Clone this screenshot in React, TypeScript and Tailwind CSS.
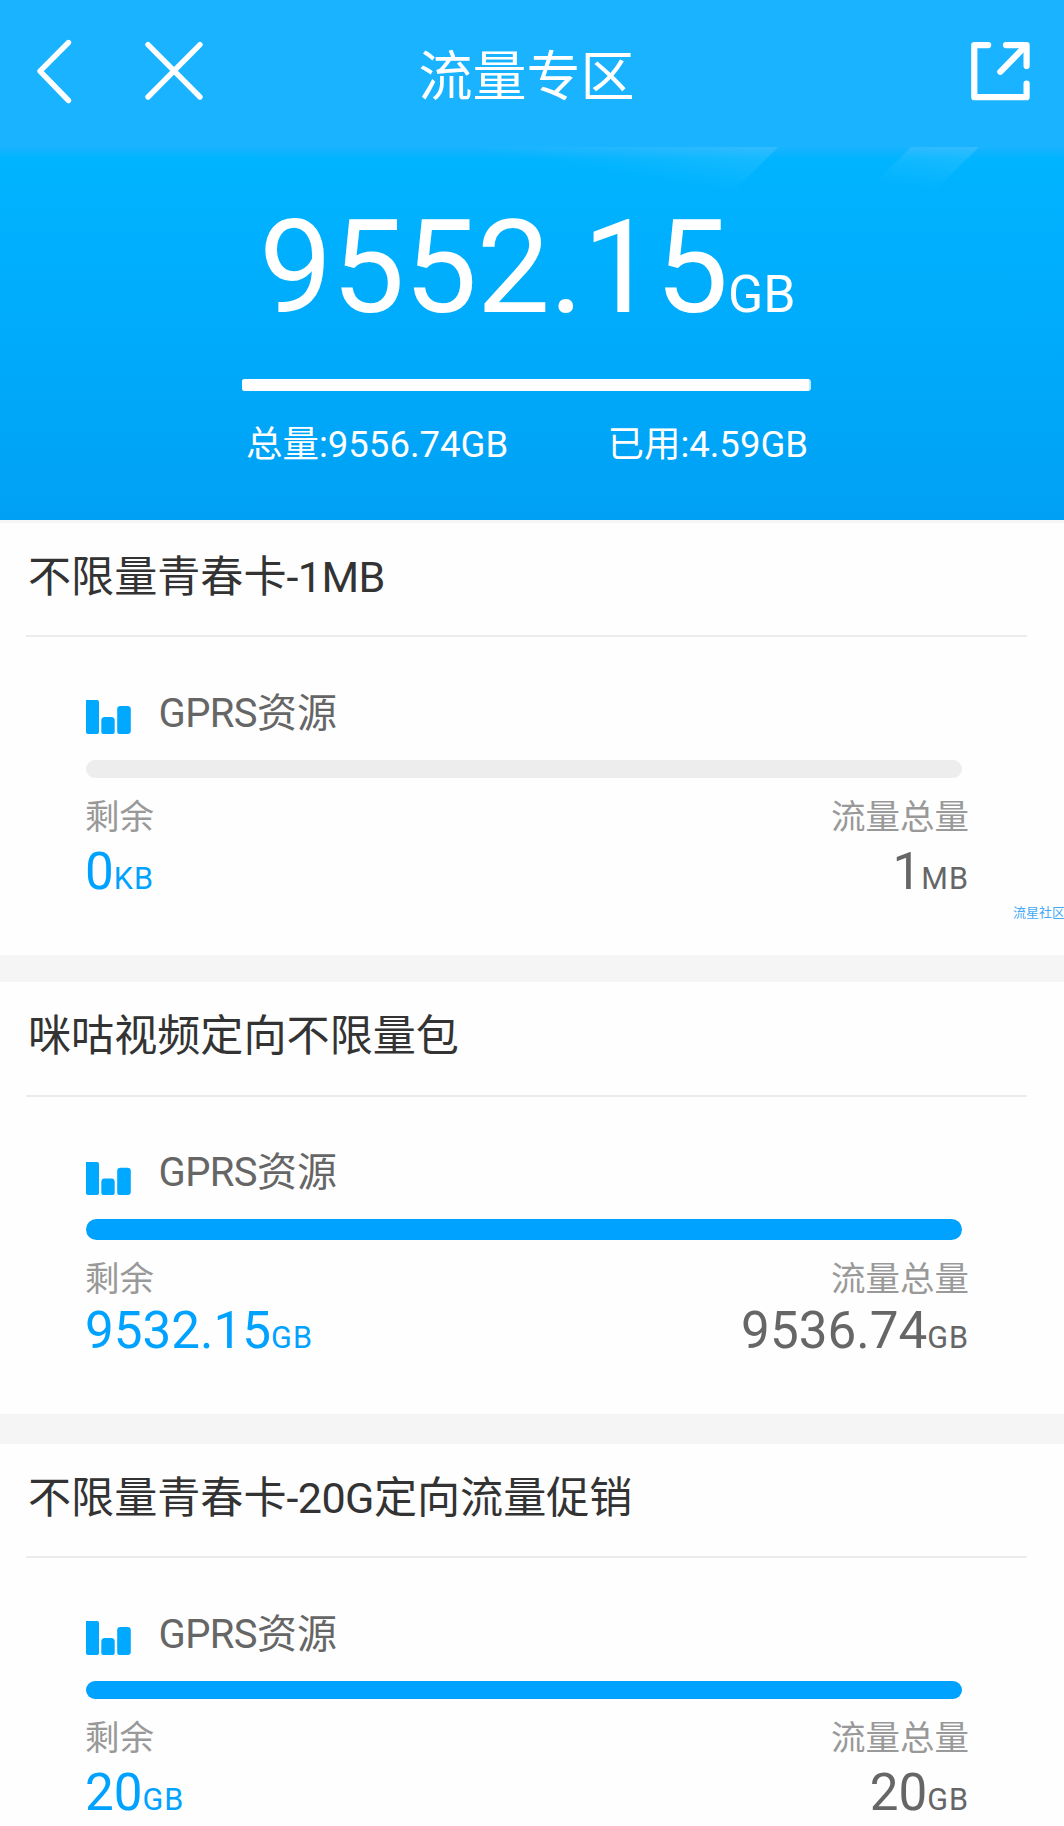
import React from "react";

type Amount = { value: string; unit: string };

type Plan = {
  title: string;
  left: Amount;
  total: Amount;
  headClass: string;
  resourceClass: string;
  iconClass: string;
  barClass: string;
  labelClass: string;
  valueClass: string;
  gapClass: string;
};

const plans: Plan[] = [
  {
    title: "不限量青春卡-1MB",
    left: { value: "0", unit: "KB" },
    total: { value: "1", unit: "MB" },
    headClass: "h-[114px]",
    resourceClass: "mt-[43px]",
    iconClass: "mt-5 h-[34px]",
    barClass: "mt-4 h-[18px] bg-[#ededed]",
    labelClass: "mt-[19px]",
    valueClass: "mt-[7px]",
    gapClass: "h-[27px]",
  },
  {
    title: "咪咕视频定向不限量包",
    left: { value: "9532.15", unit: "GB" },
    total: { value: "9536.74", unit: "GB" },
    headClass: "h-[115px]",
    resourceClass: "mt-[42px]",
    iconClass: "mt-[23px] h-[33px]",
    barClass: "mt-4 h-[21px] bg-[#00a2ff]",
    labelClass: "mt-[19px]",
    valueClass: "mt-1",
    gapClass: "h-[30px]",
  },
  {
    title: "不限量青春卡-20G定向流量促销",
    left: { value: "20", unit: "GB" },
    total: { value: "20", unit: "GB" },
    headClass: "h-[114px]",
    resourceClass: "mt-[43px]",
    iconClass: "mt-5 h-[34px]",
    barClass: "mt-4 h-[18px] bg-[#00a2ff]",
    labelClass: "mt-[19px]",
    valueClass: "mt-[7px]",
    gapClass: "h-0",
  },
];

function BackIcon() {
  return (
    <svg className="h-[72px] w-10 shrink-0" viewBox="0 0 40 72" fill="none" stroke="white" strokeWidth="5.4" strokeLinecap="round" strokeLinejoin="round">
      <path d="M33.5 7.5 5 36.2 33.5 65.5" />
    </svg>
  );
}

function CloseIcon() {
  return (
    <svg className="h-[72px] w-[68px] shrink-0" viewBox="0 0 68 72" fill="none" stroke="white" strokeWidth="5.4" strokeLinecap="round">
      <path d="M8 9.7 60 62M60 9.7 8 62" />
    </svg>
  );
}

function ShareIcon() {
  return (
    <svg className="h-[60px] w-[60px] shrink-0" viewBox="0 0 60 60" fill="none" stroke="white" strokeWidth="6.2" strokeLinecap="round" strokeLinejoin="round">
      <path d="M18.2 4.1H4.3V56.2H56.6V42.6" />
      <path d="M36 4.1H56.6V25" />
      <path d="M55.4 5.2 30.3 30.8" />
    </svg>
  );
}

function BarsIcon({ className }: { className: string }) {
  return (
    <svg className={`w-[45px] shrink-0 ${className}`} viewBox="0 0 45 34" preserveAspectRatio="none" fill="#00a8ff">
      <path d="M0 0H11Q13 0 13 2V32Q13 34 11 34H2Q0 34 0 32Z" />
      <path d="M15.3 20.5Q15.3 17 18.8 17H25.2Q28.7 17 28.7 20.5V32Q28.7 34 26.7 34H17.3Q15.3 34 15.3 32Z" />
      <path d="M31.2 9.3Q31.2 6 34.5 6H41.5Q44.8 6 44.8 9.3V30.7Q44.8 34 41.5 34H33.2Q31.2 34 31.2 32Z" />
    </svg>
  );
}

function Beams() {
  return (
    <svg className="absolute top-[147px] left-0 h-20 w-full" viewBox="0 0 1064 80" preserveAspectRatio="none">
      <defs>
        <linearGradient id="wide" gradientUnits="userSpaceOnUse" x1="750" y1="-10" x2="741" y2="46">
          <stop offset="0" stopColor="white" stopOpacity="0.13" />
          <stop offset="1" stopColor="white" stopOpacity="0" />
        </linearGradient>
        <linearGradient id="narrow" gradientUnits="userSpaceOnUse" x1="945" y1="-12" x2="937" y2="44">
          <stop offset="0" stopColor="white" stopOpacity="0.14" />
          <stop offset="1" stopColor="white" stopOpacity="0" />
        </linearGradient>
      </defs>
      <path d="M440 0H778L700 78H440Z" fill="url(#wide)" />
      <path d="M911 0H979L910 68 850 61Z" fill="url(#narrow)" />
    </svg>
  );
}

/* Latin runs are set slightly tighter than the Chinese text around them. */
function MixedText({ text }: { text: string }) {
  return (
    <>
      {text.split(/([-0-9A-Za-z]+)/).map((part, i) =>
        i % 2 === 1 ? (
          <span key={i} className="tracking-[-0.6px]">
            {part}
          </span>
        ) : (
          part
        ),
      )}
    </>
  );
}

function AmountText({ amount }: { amount: Amount }) {
  return (
    <p className="text-[51.2px] leading-[56px]">
      {amount.value}
      <span className="text-[30.5px] tracking-[1px]">{amount.unit}</span>
    </p>
  );
}

function PlanCard({ plan }: { plan: Plan }) {
  return (
    <>
      <section className="h-[432px] bg-[#fefefe]">
        <div className={`mr-[37px] ml-[26px] border-b-2 border-[#ececec] ${plan.headClass}`}>
          <h2 className="pl-[2px] text-[43.1px] leading-[110px] text-[#333]">
            <MixedText text={plan.title} />
          </h2>
        </div>
        <div className="mr-[95px] ml-[85px]">
          <div className={`ml-px flex h-16 ${plan.resourceClass}`}>
            <BarsIcon className={plan.iconClass} />
            <span className="ml-[27.5px] text-[40px] leading-[68px] text-[#666]">
              <MixedText text="GPRS资源" />
            </span>
          </div>
          <div className={`mr-[7px] ml-px rounded-full ${plan.barClass}`} />
          <div className={`flex justify-between text-[34.5px] leading-10 text-[#999] ${plan.labelClass}`}>
            <span>剩余</span>
            <span>流量总量</span>
          </div>
          <div className={`flex justify-between ${plan.valueClass}`}>
            <div className="text-[#00a2ff]">
              <AmountText amount={plan.left} />
            </div>
            <div className="text-[#666]">
              <AmountText amount={plan.total} />
            </div>
          </div>
        </div>
      </section>
      <div className={`bg-[#f5f5f5] ${plan.gapClass}`} />
    </>
  );
}

export default function App() {
  return (
    <div
      lang="zh-CN"
      className="relative h-[1826px] w-[1064px] overflow-hidden bg-[#fefefe] font-['Roboto','Noto_Sans_CJK_SC',sans-serif] whitespace-nowrap"
    >
      <header className="flex h-[147px] items-start justify-between bg-[#1ab3ff] pr-[34px] pl-[35px] text-white">
        <div className="mt-[35px] flex w-[383px] gap-[65px]">
          <BackIcon />
          <CloseIcon />
        </div>
        <h1 className="mt-[39px] text-[54px] leading-[78px]">流量专区</h1>
        <div className="mt-[41px] flex w-[395px] justify-end">
          <ShareIcon />
        </div>
      </header>
      <div className="h-[373px] bg-[linear-gradient(to_bottom,#18b3ff_0px,#00b4ff_12px,#00b2ff_50px,#00a1f5_100%)] text-white">
        <p className="h-[232px] pt-[55px] pl-[259px] text-[130.5px] leading-[132px] tracking-[-0.8px]">
          9552.15<span className="text-[51.8px] tracking-normal">GB</span>
        </p>
        <div className="ml-[242px] h-3 w-[569px] overflow-hidden rounded-[3px] bg-white/75">
          <div className="h-full w-[567px] bg-white" />
        </div>
        <div className="mt-7 ml-[246px] flex w-[562px] justify-between text-[36.5px] leading-[52px]">
          <span>总量:9556.74GB</span>
          <span>已用:4.59GB</span>
        </div>
      </div>
      <div className="h-[3px] bg-[#f5f6f7]" />
      {plans.map((plan) => (
        <PlanCard key={plan.title} plan={plan} />
      ))}
      <Beams />
      <span className="absolute top-[903px] left-[1013px] text-[13px] leading-5 text-[#45a9f5]">流星社区</span>
    </div>
  );
}
